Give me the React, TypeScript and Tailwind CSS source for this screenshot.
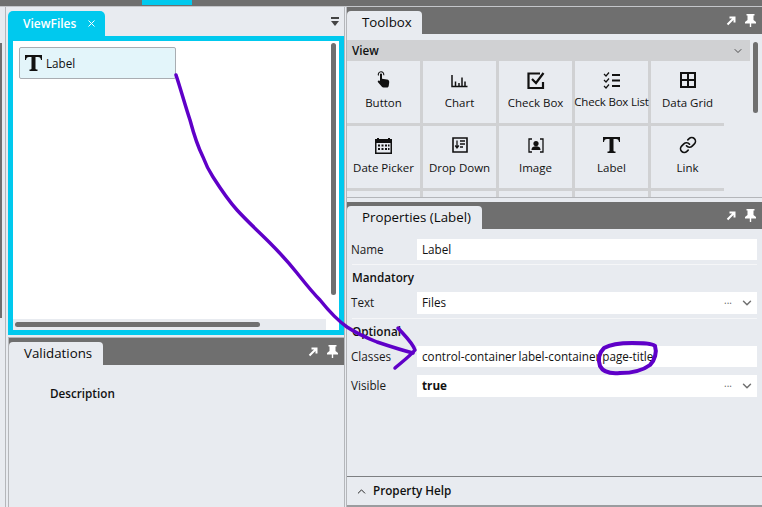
import { ChevronDown, ChevronUp, Link } from 'lucide-react'
import type { ReactNode } from 'react'

const font = { fontFamily: '"Open Sans"' }

function PinIcons() {
  return (
    <div className="ml-auto flex items-center gap-[9px] pr-[6px]">
      <svg width="10" height="10" viewBox="0 0 10 10" fill="none">
        <path d="M1.5 8.5 8 2M3.5 1.5H8.5V6.5" stroke="#fff" strokeWidth="2" />
      </svg>
      <svg width="11" height="13" viewBox="0 0 11 13" fill="#fff">
        <path d="M1.500 0h8v1.500H8.500V6l2.500 2v1.500H6.200V13H4.800V9.500H0V8l2.500-2V1.500h-1z" />
      </svg>
    </div>
  )
}

function PanelHeader({ title, tabWidth }: { title: string; tabWidth: string }) {
  return (
    <div className="flex h-[27px] shrink-0 items-end bg-[#6f6f6f]">
      <div className={`flex h-[23px] items-center rounded-tl-[4px] rounded-tr-[4px] bg-[#e8ebf0] pl-[15px] text-[13.3px] text-[#0a0a0a] ${tabWidth}`}>
        {title}
      </div>
      <div className="flex h-full flex-1 items-center">
        <PinIcons />
      </div>
    </div>
  )
}

const tools: { label: string; icon: ReactNode; tight?: boolean }[] = [
  {
    label: 'Button',
    icon: (
      <svg width="18" height="20" viewBox="0 0 18 20" fill="#111">
        <path d="M6 1.200a3.300 3.300 0 0 0-3 4.600l1-.5A2.200 2.200 0 1 1 8.200 5l1 .4A3.300 3.300 0 0 0 6 1.200z" />
        <path d="M5 4.300c0-1.200 2-1.200 2 0v4.400l5 .9c1.600.3 2.400 1.200 2.200 2.800l-.5 3.600c-.1.9-.8 1.500-1.700 1.500H8.500c-.7 0-1.200-.3-1.600-.8L3 12.200c-.8-1 .5-2.200 1.500-1.400l.5.5z" />
      </svg>
    ),
  },
  {
    label: 'Chart',
    icon: (
      <svg width="17" height="15" viewBox="0 0 17 15" fill="none" stroke="#111" strokeWidth="1.500">
        <path d="M1 2v11.500h15.500M4.500 13V8.500M8 13V10M11 13V4.500M14 13V8.500" />
      </svg>
    ),
  },
  {
    label: 'Check Box',
    icon: (
      <svg width="18" height="17" viewBox="0 0 18 17" fill="none" stroke="#111" strokeWidth="2.200">
        <path d="M16 10v6H1.500V1.500H13M5 7l4 4L16.500 1" />
      </svg>
    ),
  },
  {
    label: 'Check Box List',
    tight: true,
    icon: (
      <svg width="18" height="17" viewBox="0 0 18 17" fill="none" stroke="#111" strokeWidth="1.200">
        <path d="M1 2l2 2 3-3.500M1 8l2 2 3-3.500M1 14l2 2 3-3.500" />
        <path d="M9 3h8M9 8.500h8M9 14h8" strokeWidth="1.800" />
      </svg>
    ),
  },
  {
    label: 'Data Grid',
    icon: (
      <svg width="16" height="16" viewBox="0 0 16 16" fill="none" stroke="#111" strokeWidth="2">
        <path d="M1 1h14v14H1zM8 1v14M1 8h14" />
      </svg>
    ),
  },
  {
    label: 'Date Picker',
    icon: (
      <svg width="17" height="17" viewBox="0 0 17 17" fill="#111">
        <path d="M2 1h2v1h9V1h2v1h2v15H0V2h2zM1.500 6v9.500h14V6z" />
        <path d="M3 7.500h2v2H3zM6.500 7.500h2v2h-2zM10 7.500h2v2h-2zM13 7.500h1.500v2H13zM3 11h2v2H3zM6.500 11h2v2h-2zM10 11h2v2h-2zM13 11h1.500v2H13z" />
      </svg>
    ),
  },
  {
    label: 'Drop Down',
    icon: (
      <svg width="16" height="16" viewBox="0 0 16 16" fill="none" stroke="#111" strokeWidth="1.600">
        <path d="M1 1h14v14H1z" />
        <path d="M5 3.500v7M3.200 8.500 5 11l1.800-2.500M8 4h5M8 7h5M8 10h3" strokeWidth="1.300" />
      </svg>
    ),
  },
  {
    label: 'Image',
    icon: (
      <svg width="16" height="15" viewBox="0 0 16 15" fill="none">
        <path d="M4 1H1v13h3M12 1h3v13h-3" stroke="#111" strokeWidth="1.300" />
        <circle cx="8" cy="5.500" r="2.600" fill="#111" />
        <path d="M3.500 12c0-3 2-3.800 4.500-3.800s4.500.8 4.500 3.800z" fill="#111" />
      </svg>
    ),
  },
  {
    label: 'Label',
    icon: (
      <svg width="17" height="16" viewBox="0 0 17 16" fill="#111">
        <path d="M0 0h17v5h-1c-.3-2-1-3-3-3h-2.500v11.500c0 .7.500 1 2 1V16H4.500v-1.500c1.500 0 2-.3 2-1V2H4C2 2 1.300 3 1 5H0z" />
      </svg>
    ),
  },
  { label: 'Link', icon: <Link size={18} strokeWidth={2.200} color="#111" /> },
]

function PropRow({ label, children, dropdown, bold, short }: { label: string; children: ReactNode; dropdown?: boolean; bold?: boolean; short?: boolean }) {
  return (
    <div className="flex items-center">
      <span className="w-[70px] pl-[4px] text-[11.7px] text-[#1a1a1a]">{label}</span>
      <div className={`flex w-[340px] items-center bg-white pl-[5px] text-[11.7px] text-[#111] ${short ? 'h-[21px]' : 'h-[22px]'} ${bold ? 'font-bold' : ''}`}>
        <span className="whitespace-nowrap [word-spacing:-1px]">{children}</span>
        {dropdown && (
          <div className="ml-auto flex items-center gap-[8px] pr-[3px]">
            <span className="mb-[5px] text-[10px] font-normal text-[#666]">...</span>
            <ChevronDown size={14} strokeWidth={2.500} color="#707070" />
          </div>
        )}
      </div>
    </div>
  )
}

export default function App() {
  return (
    <div style={font} className="relative flex h-[507px] w-[762px] flex-col overflow-hidden bg-[#e8ebf0]">
      {/* window strip along the top */}
      <div className="h-[6px] shrink-0 bg-[#6f6f6f] pl-[142px]">
        <div className="h-[5px] w-[50px] bg-[#00c9ee]" />
      </div>
      <div className="flex min-h-0 flex-1 border-t border-[#c4c6ca]">
        {/* left column */}
        <div className="flex w-[345px] shrink-0 border-r border-[#b4b6ba]">
          <div className="mr-[2px] w-[6px] shrink-0 border-r border-[#b4b6ba] pt-[36px]">
            <div className="h-[275px] w-[2px] bg-[#6f6f6f]" />
          </div>
          <div className="flex min-w-0 flex-1 flex-col">
            <div className="flex h-[29px] shrink-0 items-end">
              <div className="flex h-[25px] w-[97px] items-center rounded-tl-[5px] rounded-tr-[5px] bg-[#00c9ee] pl-[15px] text-[12px] font-semibold text-white">
                ViewFiles
                <svg width="7" height="7" viewBox="0 0 7 7" stroke="#fff" strokeWidth="1" className="ml-[12px]">
                  <path d="M.5.5l6 6M6.500.5l-6 6" />
                </svg>
              </div>
              <div className="mb-[10px] ml-auto mr-[5px] flex flex-col items-center">
                <div className="h-[2px] w-[8px] bg-[#444]" />
                <div className="mt-[2px] h-0 w-0 border-x-[4px] border-t-[5px] border-x-transparent border-t-[#444]" />
              </div>
            </div>
            <div className="h-[299px] w-[336px] shrink-0 border-[5px] border-[#00c9ee] bg-white">
              <div className="relative h-full pl-[6px] pt-[6px]">
                <div className="flex h-[32px] w-[157px] items-center rounded-[2px] border border-[#a9adb2] bg-[#e3f5fa] pl-[5px] text-[11.7px] text-[#111]">
                  <svg width="17" height="16" viewBox="0 0 17 16" fill="#111" className="mr-[4px]">
                    <path d="M0 0h17v5h-1c-.3-2-1-3-3-3h-2.500v11.500c0 .7.500 1 2 1V16H4.500v-1.500c1.500 0 2-.3 2-1V2H4C2 2 1.300 3 1 5H0z" />
                  </svg>
                  <span className="pt-[1px]">Label</span>
                </div>
                <div className="absolute right-[3px] top-[2px] h-[252px] w-[5px] rounded-full bg-[#6f6f6f]" />
                <div className="absolute bottom-0 left-0 flex h-[11px] w-[313px] items-center bg-[#e8ebf0] pl-[2px]">
                  <div className="h-[5px] w-[245px] rounded-full bg-[#6f6f6f]" />
                </div>
              </div>
            </div>
            <div className="mt-[2px] flex flex-1 flex-col border-l border-t border-[#b4b6ba]">
              <PanelHeader title="Validations" tabWidth="w-[94px]" />
              <div className="pl-[41px] pt-[20px] text-[11.7px] font-semibold text-[#111]">Description</div>
            </div>
          </div>
        </div>
        {/* right column */}
        <div className="ml-[1px] flex min-w-0 flex-1 flex-col border-l border-[#b4b6ba]">
          <div className="flex h-[191px] shrink-0 flex-col border-b border-[#b4b6ba]">
            <PanelHeader title="Toolbox" tabWidth="w-[75px]" />
            <div className="relative min-h-0 flex-1 overflow-hidden pt-[6px]">
              <div className="flex h-[21px] w-[403px] items-center justify-between bg-[#d0d1d3] pl-[5px] pr-[6px] text-[11.7px] font-semibold text-[#111]">
                View
                <ChevronDown size={12} strokeWidth={1.500} color="#222" />
              </div>
              <div className="grid w-[377px] grid-cols-[repeat(5,73px)] gap-[3px] bg-[#d0d1d3]">
                {tools.map((t) => (
                  <div key={t.label} className="flex h-[62px] flex-col items-center bg-[#e8ebf0] pt-[9px]">
                    <div className="flex h-[20px] items-center">{t.icon}</div>
                    <span className={`whitespace-nowrap text-[11.5px] text-[#111] ${t.tight ? 'mt-[3px] tracking-[-0.2px]' : 'mt-[4px]'}`}>{t.label}</span>
                  </div>
                ))}
                {[0, 1, 2, 3, 4].map((i) => (
                  <div key={i} className="h-[62px] bg-[#e8ebf0]" />
                ))}
              </div>
              <div className="absolute right-[4px] top-[8px] h-[71px] w-[5px] rounded-full bg-[#6f6f6f]" />
            </div>
          </div>
          <div className="mt-[4px] flex min-h-0 flex-1 flex-col">
            <PanelHeader title="Properties (Label)" tabWidth="w-[135px]" />
            <div className="flex-1 pt-[10px]">
              <PropRow label="Name" short>Label</PropRow>
              <div className="mx-[5px] mt-[4px] h-px bg-[#f5f6f8]" />
              <div className="h-[27px] pl-[5px] pt-[4px] text-[11.7px] font-semibold text-[#111]">Mandatory</div>
              <PropRow label="Text" dropdown>Files</PropRow>
              <div className="mx-[5px] mt-[4px] h-px bg-[#f5f6f8]" />
              <div className="h-[27px] pl-[5px] pt-[4px] text-[11.7px] font-semibold text-[#111]">Optional</div>
              <PropRow label="Classes" short>control-container label-container page-title</PropRow>
              <div className="h-[8px]" />
              <PropRow label="Visible" dropdown bold>true</PropRow>
            </div>
            <div className="flex h-[31px] shrink-0 items-center border-b-2 border-t border-b-[#9a9c9f] border-t-[#7d7f82] pl-[8px] text-[11.7px] font-semibold text-[#111]">
              <ChevronUp size={13} strokeWidth={1.800} color="#222" className="mr-[5px]" />
              Property Help
            </div>
          </div>
        </div>
      </div>
      {/* hand drawn annotation on top of the screenshot */}
      <svg className="absolute left-0 top-0" width="762" height="507" viewBox="0 0 762 507" fill="none" stroke="#5f00c8" strokeWidth="3.500" strokeLinecap="round" strokeLinejoin="round">
        <path d="M176 75C181 90 185 105 190 120C194 135 198 147 203 157C206 165 209 171 213 177C220 188 228 200 237 210C247 221 259 232 270 243C280 253 289 263 297 273C305 283 312 292 320 300C328 310 337 320 347 327C356 333 367 338 377 342C389 346 401 350 413 353" />
        <path d="M398 328C404 335 412 342 415 350C410 356 402 362 395 368" />
        <path strokeWidth="4" d="M604 348C611 344 622 343 632 343C642 343 652 343 655 346C657 352 655 360 650 365C642 371 630 373 620 373C610 374 603 372 600 366C598 360 598 354 604 348" />
      </svg>
    </div>
  )
}
